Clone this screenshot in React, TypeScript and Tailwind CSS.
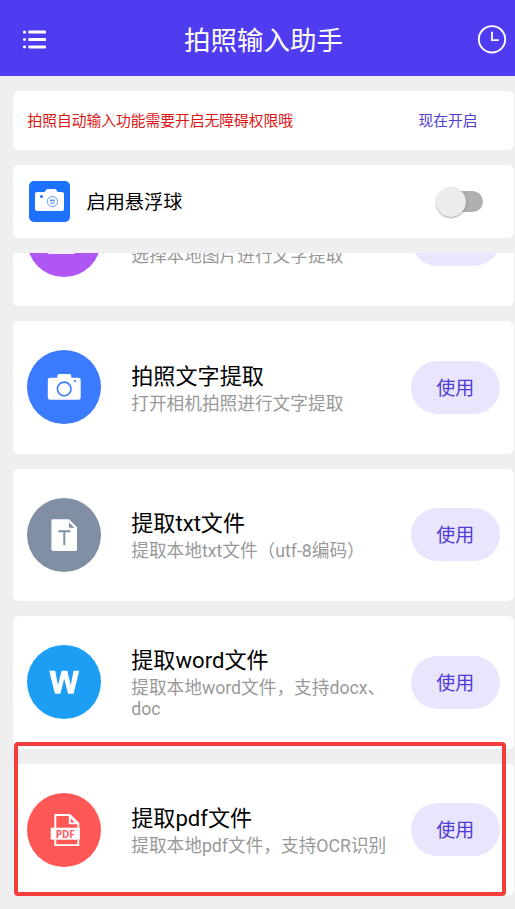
import React from "react";

type Feature = {
  title: string;
  desc: string;
  color: string;
  icon: React.ReactNode;
};

function PictureIcon() {
  return (
    <svg width="74" height="74" viewBox="0 0 74 74" aria-hidden="true">
      <rect x="20" y="21" width="29" height="30" rx="3" fill="#fff" opacity="0.9" />
    </svg>
  );
}

function CameraIcon() {
  return (
    <svg width="74" height="74" viewBox="0 0 74 74" aria-hidden="true">
      <path
        d="M23 27.700h7.300V26a2 2 0 0 1 2-2h10a2 2 0 0 1 2 2v1.700H51.500a2.200 2.200 0 0 1 2.200 2.200v17.600a2.200 2.200 0 0 1-2.200 2.200H23a2.200 2.200 0 0 1-2.200-2.200V29.900A2.200 2.200 0 0 1 23 27.700z"
        fill="#fff"
      />
      <circle cx="37.200" cy="38.900" r="6.800" fill="none" stroke="#3b7bff" strokeWidth="1.600" />
      <circle cx="47.900" cy="31.100" r="1.100" fill="#3b7bff" />
    </svg>
  );
}

function TxtIcon() {
  return (
    <svg width="74" height="74" viewBox="0 0 74 74" aria-hidden="true">
      <path
        d="M25.700 21.200H42l8 8v22.400a1.300 1.300 0 0 1-1.300 1.300h-23a1.300 1.300 0 0 1-1.300-1.300V22.500a1.300 1.300 0 0 1 1.300-1.300z"
        fill="#fff"
      />
      <path d="M42 24.500v5.200h5.400z" fill="#808fa3" />
      <path d="M31.300 33.200h12M37.300 33.200v14" fill="none" stroke="#808fa3" strokeWidth="2" />
    </svg>
  );
}

function WordIcon() {
  return (
    <svg width="74" height="74" viewBox="0 0 74 74" aria-hidden="true">
      <path
        d="M22.200 25.700h6l2.800 14.500 3.600-14.500h5.700l3.500 14.500 2.700-14.500h5.700l-5.600 23.100h-5.500l-3.900-15.100-3.800 15.100h-5.500z"
        fill="#fff"
      />
    </svg>
  );
}

function PdfIcon() {
  return (
    <svg width="74" height="74" viewBox="0 0 74 74" aria-hidden="true">
      <path d="M28.300 35V22h14.400l8.600 8.500V35" fill="none" stroke="#fff" strokeWidth="1.900" />
      <path d="M41.800 22v9.200h9.500z" fill="#fff" />
      <path d="M43.800 25.600v3.800h3.900z" fill="#ff5656" />
      <rect x="23.700" y="34.700" width="29.200" height="12" fill="#fff" />
      <path d="M28.300 46.700v5.400h23v-5.400" fill="none" stroke="#fff" strokeWidth="1.900" />
      <text
        x="38.200"
        y="44.800"
        textAnchor="middle"
        textLength="19"
        lengthAdjust="spacingAndGlyphs"
        fontFamily="Open Sans, sans-serif"
        fontWeight="700"
        fontSize="11"
        fill="#ff5656"
      >
        PDF
      </text>
    </svg>
  );
}

const features: Feature[] = [
  { title: "图片文字提取", desc: "选择本地图片进行文字提取", color: "bg-[#b056f5]", icon: <PictureIcon /> },
  { title: "拍照文字提取", desc: "打开相机拍照进行文字提取", color: "bg-[#3b7bff]", icon: <CameraIcon /> },
  { title: "提取txt文件", desc: "提取本地txt文件（utf-8编码）", color: "bg-[#808fa3]", icon: <TxtIcon /> },
  { title: "提取word文件", desc: "提取本地word文件，支持docx、doc", color: "bg-[#1c9ef5]", icon: <WordIcon /> },
  { title: "提取pdf文件", desc: "提取本地pdf文件，支持OCR识别", color: "bg-[#ff5656]", icon: <PdfIcon /> },
];

function FeatureCard({ title, desc, color, icon }: Feature) {
  return (
    <article className="flex h-[132.75px] shrink-0 items-center rounded-[6px] bg-white pr-[14.5px] pl-[14.25px]">
      <div className={`size-[74px] shrink-0 overflow-hidden rounded-full ${color}`}>{icon}</div>
      <div className="ml-[30px] min-w-0 flex-1">
        <h2 className="pb-[2px] text-[22.1px] leading-[30px] text-black">{title}</h2>
        <p className="-mb-px pt-px text-[17.68px] leading-[21px] text-[#999]">{desc}</p>
      </div>
      <button className="ml-3 h-[53px] w-[88.5px] shrink-0 rounded-full bg-[#e9e5fd] pt-[3px] text-[19px] text-[#4f3bd6]">
        使用
      </button>
    </article>
  );
}

export default function App() {
  return (
    <div className="relative flex h-[909px] w-[515px] flex-col overflow-hidden bg-[#efeff1] font-[Roboto,'Noto_Sans_CJK_SC',sans-serif]">
      <header className="flex h-[76px] shrink-0 items-center justify-between bg-[#4f3bf0] pt-[2px] pr-[8px] pl-[22px]">
        <svg width="30" height="20" viewBox="0 0 30 20" fill="#fff" aria-label="menu">
          <rect x="1" y="1.800" width="3" height="2.600" rx="1" />
          <rect x="1" y="9.200" width="3" height="2.600" rx="1" />
          <rect x="1" y="16.600" width="3" height="2.600" rx="1" />
          <rect x="6.300" y="1.600" width="17.700" height="3" rx="0.800" />
          <rect x="6.300" y="9" width="17.700" height="3" rx="0.800" />
          <rect x="6.300" y="16.400" width="17.700" height="3" rx="0.800" />
        </svg>
        <h1 className="pt-[3px] pr-[2px] text-[26.5px] text-white">拍照输入助手</h1>
        <svg width="30" height="30" viewBox="0 0 30 30" fill="none" stroke="#fff" aria-label="history">
          <circle cx="15" cy="15.300" r="13.200" strokeWidth="1.900" />
          <path d="M15 7.800v8.300h6.800" strokeWidth="1.800" />
        </svg>
      </header>

      <main className="flex min-h-0 flex-1 flex-col pt-[15px] pr-px pb-[12.5px] pl-[13px]">
        <section className="flex h-[59px] shrink-0 items-center justify-between rounded-[6px] bg-white pt-[2px] pr-[36.5px] pl-[14.5px] text-[14.75px]">
          <p className="text-[#dc1414]">拍照自动输入功能需要开启无障碍权限哦</p>
          <button className="text-[#4f3bd6]">现在开启</button>
        </section>

        <section className="mt-[15px] flex h-[73px] shrink-0 items-center rounded-[6px] bg-white pr-[31px] pl-4">
          <svg width="41" height="41" viewBox="0 0 41 41" aria-hidden="true">
            <rect width="41" height="41" rx="5" fill="#1e70ff" />
            <path
              d="M8 11h7.500l1.500-2q.7-1 2-1h6.500q1.300 0 2 1l1.200 2H33a2 2 0 0 1 2 2v15a2 2 0 0 1-2 2H8a2 2 0 0 1-2-2V13a2 2 0 0 1 2-2z"
              fill="#fff"
            />
            <circle cx="12.500" cy="15.500" r="1.500" fill="#1e70ff" />
            <g fill="none" stroke="#4389ff" strokeWidth="0.800">
              <circle cx="23.400" cy="20.500" r="5.200" />
              <path d="M21 19.500h4.800M21 22.200h4.800M22.200 17.500v4M24.700 17.500v4" />
            </g>
          </svg>
          <span className="ml-[16.5px] flex-1 pt-[3px] text-[19.2px] text-black">启用悬浮球</span>
          <div role="switch" aria-checked="false" className="flex h-[21px] w-[44px] items-center rounded-full bg-[#b0b0b0]">
            <span className="-ml-[3.5px] size-[30px] shrink-0 rounded-full bg-[#ececec] shadow-[0_1px_2px_rgba(0,0,0,0.35)]" />
          </div>
        </section>

        <div className="mt-[15px] flex min-h-0 flex-1 flex-col overflow-hidden">
          <div className="-mt-[79.5px] flex flex-col gap-[14.75px]">
            {features.map((feature) => (
              <FeatureCard key={feature.title} {...feature} />
            ))}
          </div>
        </div>
      </main>

      <div className="pointer-events-none absolute top-[742px] left-[14px] h-[154px] w-[492px] rounded-[4px] border-4 border-[#f73c3c]" />
    </div>
  );
}
